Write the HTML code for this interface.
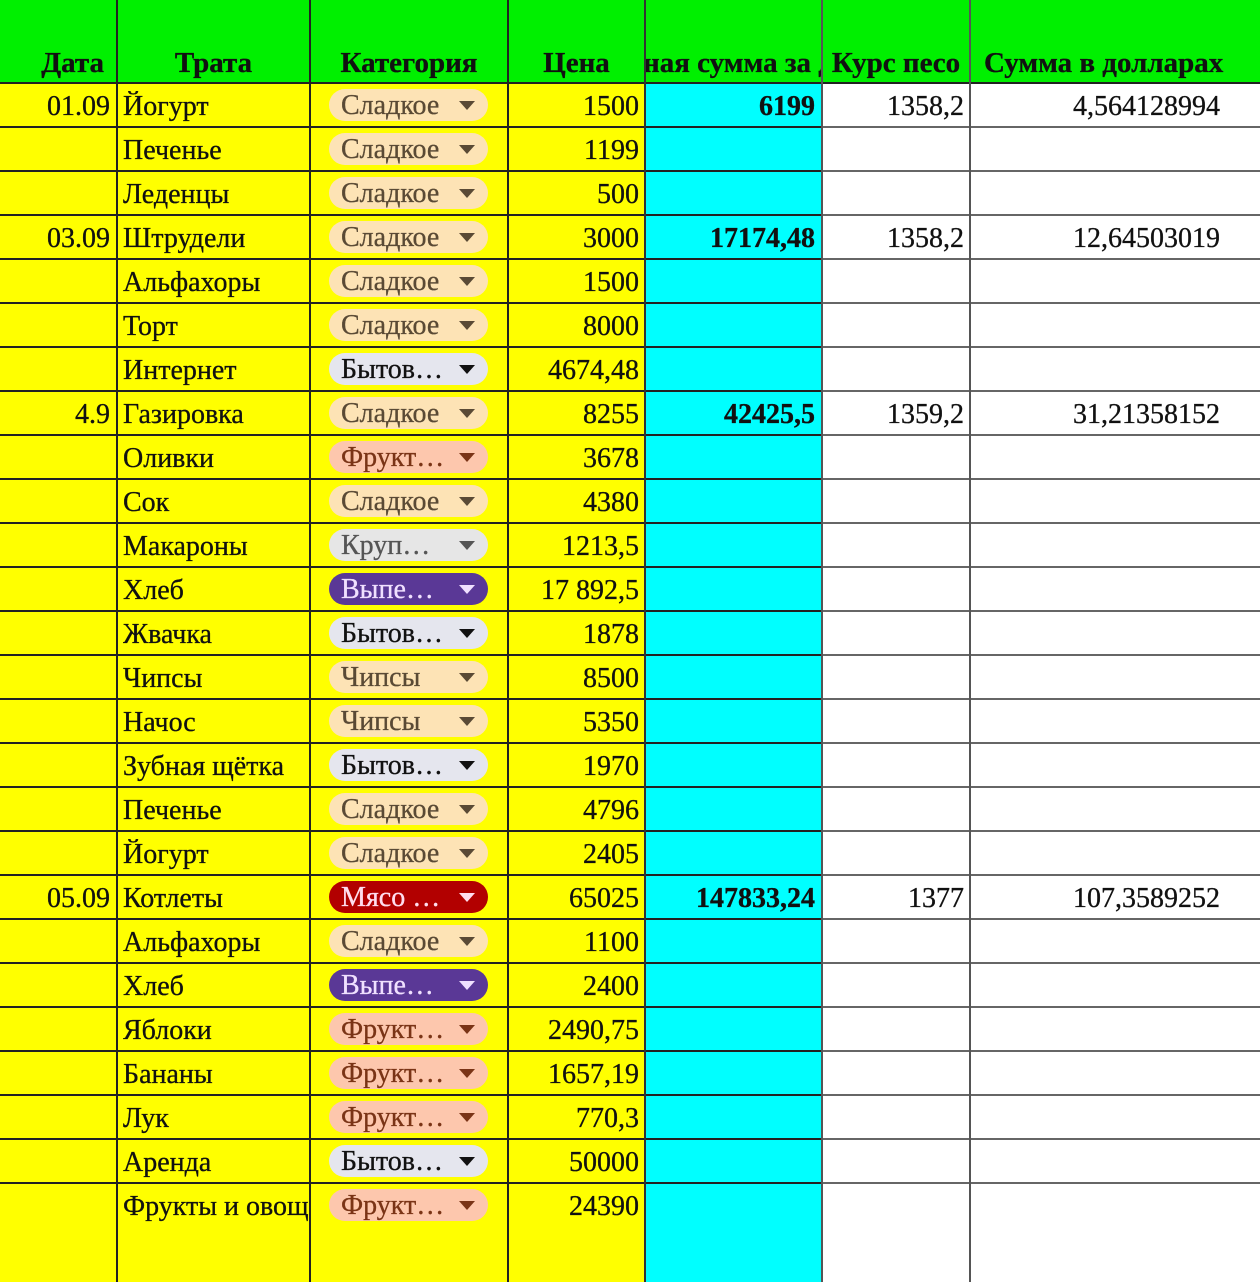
<!DOCTYPE html>
<html><head><meta charset="utf-8">
<style>
*{margin:0;padding:0;box-sizing:border-box}
body{width:1260px;height:1282px;position:relative;overflow:hidden;background:#fff;font-family:"Liberation Serif","Noto Serif CJK SC",serif;font-size:28px;color:#111;-webkit-text-stroke:0.3px}
.bg{position:absolute;top:0;height:1282px}
.v{position:absolute;top:0;height:1282px;width:2px;background:#222}
.h{position:absolute;left:0;height:2px}
.hd{position:absolute;top:0;left:0;width:1260px;height:83px;background:#00f000}
.hc{position:absolute;top:45px;height:36px;line-height:36px;font-weight:bold;font-size:29px;white-space:nowrap;overflow:hidden;transform-origin:center}
.r{position:absolute;left:0;width:1260px;height:44px}
.c{position:absolute;top:8px;line-height:32px;white-space:nowrap;overflow:hidden}
.rt{text-align:right}
.chip{position:absolute;left:329px;top:6px;width:159px;height:32px;border-radius:16px;line-height:34px;padding-left:12px;white-space:nowrap;overflow:hidden}
.chip:after{content:"";position:absolute;left:130px;top:12px;border-left:8px solid transparent;border-right:8px solid transparent;border-top:9px solid currentColor}
.s{background:#fde3b5;color:#5a4a35}
.b{background:#e5e6ee;color:#111}
.f{background:#fdc7ad;color:#7a3416}
.k{background:#e6e6e6;color:#555}
.p{background:#5a3896;color:#f0e0ff}
.m{background:#b20000;color:#fde}
</style></head><body>
<div class="bg" style="left:0;width:645px;background:#ffff00"></div>
<div class="bg" style="left:645px;width:177px;background:#00ffff"></div>
<div class="hd"></div>

<div class="hc" style="left:0;width:104px;text-align:right">Дата</div>
<div class="hc" style="left:117px;width:193px;text-align:center">Трата</div>
<div class="hc" style="left:310px;width:198px;text-align:center">Категория</div>
<div class="hc" style="left:508px;width:137px;text-align:center">Цена</div>
<div class="hc" style="left:645px;width:177px"><span style="position:absolute;left:-2px">ная сумма за д</span></div>
<div class="hc" style="left:822px;width:148px;text-align:center">Курс песо</div>
<div class="hc" style="left:970px;width:290px;padding-left:14px">Сумма в долларах</div>

<div class="h" style="top:82px;width:1260px;background:#222"></div>
<div class="h" style="top:126px;width:822px;background:#222"></div><div class="h" style="top:126px;left:822px;width:438px;background:#666"></div>
<div class="h" style="top:170px;width:822px;background:#222"></div><div class="h" style="top:170px;left:822px;width:438px;background:#666"></div>
<div class="h" style="top:214px;width:822px;background:#222"></div><div class="h" style="top:214px;left:822px;width:438px;background:#666"></div>
<div class="h" style="top:258px;width:822px;background:#222"></div><div class="h" style="top:258px;left:822px;width:438px;background:#666"></div>
<div class="h" style="top:302px;width:822px;background:#222"></div><div class="h" style="top:302px;left:822px;width:438px;background:#666"></div>
<div class="h" style="top:346px;width:822px;background:#222"></div><div class="h" style="top:346px;left:822px;width:438px;background:#666"></div>
<div class="h" style="top:390px;width:822px;background:#222"></div><div class="h" style="top:390px;left:822px;width:438px;background:#666"></div>
<div class="h" style="top:434px;width:822px;background:#222"></div><div class="h" style="top:434px;left:822px;width:438px;background:#666"></div>
<div class="h" style="top:478px;width:822px;background:#222"></div><div class="h" style="top:478px;left:822px;width:438px;background:#666"></div>
<div class="h" style="top:522px;width:822px;background:#222"></div><div class="h" style="top:522px;left:822px;width:438px;background:#666"></div>
<div class="h" style="top:566px;width:822px;background:#222"></div><div class="h" style="top:566px;left:822px;width:438px;background:#666"></div>
<div class="h" style="top:610px;width:822px;background:#222"></div><div class="h" style="top:610px;left:822px;width:438px;background:#666"></div>
<div class="h" style="top:654px;width:822px;background:#222"></div><div class="h" style="top:654px;left:822px;width:438px;background:#666"></div>
<div class="h" style="top:698px;width:822px;background:#222"></div><div class="h" style="top:698px;left:822px;width:438px;background:#666"></div>
<div class="h" style="top:742px;width:822px;background:#222"></div><div class="h" style="top:742px;left:822px;width:438px;background:#666"></div>
<div class="h" style="top:786px;width:822px;background:#222"></div><div class="h" style="top:786px;left:822px;width:438px;background:#666"></div>
<div class="h" style="top:830px;width:822px;background:#222"></div><div class="h" style="top:830px;left:822px;width:438px;background:#666"></div>
<div class="h" style="top:874px;width:822px;background:#222"></div><div class="h" style="top:874px;left:822px;width:438px;background:#666"></div>
<div class="h" style="top:918px;width:822px;background:#222"></div><div class="h" style="top:918px;left:822px;width:438px;background:#666"></div>
<div class="h" style="top:962px;width:822px;background:#222"></div><div class="h" style="top:962px;left:822px;width:438px;background:#666"></div>
<div class="h" style="top:1006px;width:822px;background:#222"></div><div class="h" style="top:1006px;left:822px;width:438px;background:#666"></div>
<div class="h" style="top:1050px;width:822px;background:#222"></div><div class="h" style="top:1050px;left:822px;width:438px;background:#666"></div>
<div class="h" style="top:1094px;width:822px;background:#222"></div><div class="h" style="top:1094px;left:822px;width:438px;background:#666"></div>
<div class="h" style="top:1138px;width:822px;background:#222"></div><div class="h" style="top:1138px;left:822px;width:438px;background:#666"></div>
<div class="h" style="top:1182px;width:822px;background:#222"></div><div class="h" style="top:1182px;left:822px;width:438px;background:#666"></div>

<div class="v" style="left:116px"></div>
<div class="v" style="left:309px"></div>
<div class="v" style="left:507px"></div>
<div class="v" style="left:644px;background:#333"></div>
<div class="v" style="left:821px;background:#555"></div>
<div class="v" style="left:969px;background:#555"></div>

<div class="r" style="top:83px"><div class="c rt" style="left:0;width:110px">01.09</div><div class="c" style="left:123px;width:186px">Йогурт</div><div class="chip s">Сладкое</div><div class="c rt" style="left:508px;width:131px">1500</div><div class="c rt" style="left:645px;width:170px;font-weight:bold">6199</div><div class="c rt" style="left:822px;width:142px">1358,2</div><div class="c rt" style="left:970px;width:250px">4,564128994</div></div>
<div class="r" style="top:127px"><div class="c" style="left:123px;width:186px">Печенье</div><div class="chip s">Сладкое</div><div class="c rt" style="left:508px;width:131px">1199</div></div>
<div class="r" style="top:171px"><div class="c" style="left:123px;width:186px">Леденцы</div><div class="chip s">Сладкое</div><div class="c rt" style="left:508px;width:131px">500</div></div>
<div class="r" style="top:215px"><div class="c rt" style="left:0;width:110px">03.09</div><div class="c" style="left:123px;width:186px">Штрудели</div><div class="chip s">Сладкое</div><div class="c rt" style="left:508px;width:131px">3000</div><div class="c rt" style="left:645px;width:170px;font-weight:bold">17174,48</div><div class="c rt" style="left:822px;width:142px">1358,2</div><div class="c rt" style="left:970px;width:250px">12,64503019</div></div>
<div class="r" style="top:259px"><div class="c" style="left:123px;width:186px">Альфахоры</div><div class="chip s">Сладкое</div><div class="c rt" style="left:508px;width:131px">1500</div></div>
<div class="r" style="top:303px"><div class="c" style="left:123px;width:186px">Торт</div><div class="chip s">Сладкое</div><div class="c rt" style="left:508px;width:131px">8000</div></div>
<div class="r" style="top:347px"><div class="c" style="left:123px;width:186px">Интернет</div><div class="chip b">Бытов…</div><div class="c rt" style="left:508px;width:131px">4674,48</div></div>
<div class="r" style="top:391px"><div class="c rt" style="left:0;width:110px">4.9</div><div class="c" style="left:123px;width:186px">Газировка</div><div class="chip s">Сладкое</div><div class="c rt" style="left:508px;width:131px">8255</div><div class="c rt" style="left:645px;width:170px;font-weight:bold">42425,5</div><div class="c rt" style="left:822px;width:142px">1359,2</div><div class="c rt" style="left:970px;width:250px">31,21358152</div></div>
<div class="r" style="top:435px"><div class="c" style="left:123px;width:186px">Оливки</div><div class="chip f">Фрукт…</div><div class="c rt" style="left:508px;width:131px">3678</div></div>
<div class="r" style="top:479px"><div class="c" style="left:123px;width:186px">Сок</div><div class="chip s">Сладкое</div><div class="c rt" style="left:508px;width:131px">4380</div></div>
<div class="r" style="top:523px"><div class="c" style="left:123px;width:186px">Макароны</div><div class="chip k">Круп…</div><div class="c rt" style="left:508px;width:131px">1213,5</div></div>
<div class="r" style="top:567px"><div class="c" style="left:123px;width:186px">Хлеб</div><div class="chip p">Выпе…</div><div class="c rt" style="left:508px;width:131px">17 892,5</div></div>
<div class="r" style="top:611px"><div class="c" style="left:123px;width:186px">Жвачка</div><div class="chip b">Бытов…</div><div class="c rt" style="left:508px;width:131px">1878</div></div>
<div class="r" style="top:655px"><div class="c" style="left:123px;width:186px">Чипсы</div><div class="chip s">Чипсы</div><div class="c rt" style="left:508px;width:131px">8500</div></div>
<div class="r" style="top:699px"><div class="c" style="left:123px;width:186px">Начос</div><div class="chip s">Чипсы</div><div class="c rt" style="left:508px;width:131px">5350</div></div>
<div class="r" style="top:743px"><div class="c" style="left:123px;width:186px">Зубная щётка</div><div class="chip b">Бытов…</div><div class="c rt" style="left:508px;width:131px">1970</div></div>
<div class="r" style="top:787px"><div class="c" style="left:123px;width:186px">Печенье</div><div class="chip s">Сладкое</div><div class="c rt" style="left:508px;width:131px">4796</div></div>
<div class="r" style="top:831px"><div class="c" style="left:123px;width:186px">Йогурт</div><div class="chip s">Сладкое</div><div class="c rt" style="left:508px;width:131px">2405</div></div>
<div class="r" style="top:875px"><div class="c rt" style="left:0;width:110px">05.09</div><div class="c" style="left:123px;width:186px">Котлеты</div><div class="chip m">Мясо …</div><div class="c rt" style="left:508px;width:131px">65025</div><div class="c rt" style="left:645px;width:170px;font-weight:bold">147833,24</div><div class="c rt" style="left:822px;width:142px">1377</div><div class="c rt" style="left:970px;width:250px">107,3589252</div></div>
<div class="r" style="top:919px"><div class="c" style="left:123px;width:186px">Альфахоры</div><div class="chip s">Сладкое</div><div class="c rt" style="left:508px;width:131px">1100</div></div>
<div class="r" style="top:963px"><div class="c" style="left:123px;width:186px">Хлеб</div><div class="chip p">Выпе…</div><div class="c rt" style="left:508px;width:131px">2400</div></div>
<div class="r" style="top:1007px"><div class="c" style="left:123px;width:186px">Яблоки</div><div class="chip f">Фрукт…</div><div class="c rt" style="left:508px;width:131px">2490,75</div></div>
<div class="r" style="top:1051px"><div class="c" style="left:123px;width:186px">Бананы</div><div class="chip f">Фрукт…</div><div class="c rt" style="left:508px;width:131px">1657,19</div></div>
<div class="r" style="top:1095px"><div class="c" style="left:123px;width:186px">Лук</div><div class="chip f">Фрукт…</div><div class="c rt" style="left:508px;width:131px">770,3</div></div>
<div class="r" style="top:1139px"><div class="c" style="left:123px;width:186px">Аренда</div><div class="chip b">Бытов…</div><div class="c rt" style="left:508px;width:131px">50000</div></div>
<div class="r" style="top:1183px"><div class="c" style="left:123px;width:186px">Фрукты и овощи</div><div class="chip f">Фрукт…</div><div class="c rt" style="left:508px;width:131px">24390</div></div>
</body></html>
